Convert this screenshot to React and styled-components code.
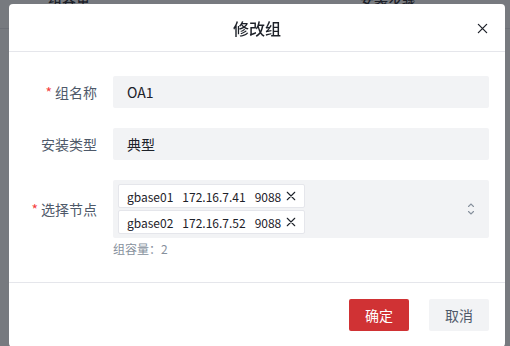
import React from "react";
import styled, { createGlobalStyle } from "styled-components";

const Global = createGlobalStyle`
  html, body {
    margin: 0;
    padding: 0;
    background: #fff;
    overflow: hidden;
  }
  body {
    font-family: "Noto Sans CJK SC", "Noto Sans", sans-serif;
    color: #1d2129;
  }
`;

const Page = styled.div`
  margin-top: -30px;
`;

const TableHead = styled.div`
  display: flex;
  align-items: center;
  height: 58px;
  border-bottom: 1px solid #e5e6eb;
  font-size: 14px;
  font-weight: 500;
  color: #1d2129;
  span:first-child {
    margin-left: 48px;
    width: 312px;
  }
`;

const Mask = styled.div`
  position: fixed;
  inset: 0;
  background: rgba(29, 33, 41, 0.6);
`;

const Modal = styled.div`
  position: fixed;
  top: 4px;
  left: 9px;
  width: 496px;
  background: #fff;
  border-radius: 4px;
`;

const Header = styled.div`
  position: relative;
  height: 47px;
  display: flex;
  align-items: center;
  justify-content: center;
  border-bottom: 1px solid #e5e6eb;
  font-size: 16px;
  font-weight: 500;
  color: #1d2129;
`;

const Close = styled.button`
  position: absolute;
  right: 17px;
  top: 18px;
  width: 12px;
  height: 12px;
  padding: 0;
  border: 0;
  background: none;
  display: flex;
  align-items: center;
  justify-content: center;
  cursor: pointer;
`;

const Body = styled.div`
  padding: 24px 16px 24px 20px;
  display: flex;
  flex-direction: column;
  gap: 20px;
`;

const Row = styled.div`
  display: flex;
  align-items: flex-start;
`;

const Label = styled.label`
  width: 68px;
  padding-right: 16px;
  height: ${(p) => p.$height || 32}px;
  flex-shrink: 0;
  display: flex;
  align-items: center;
  justify-content: flex-end;
  font-size: 14px;
  color: #4e5969;
  white-space: nowrap;
  &::before {
    content: ${(p) => (p.$required ? '"*"' : "none")};
    color: #f53f3f;
    margin-right: 3px;
    font-size: 14px;
  }
`;

const Control = styled.div`
  flex: 1;
  display: flex;
  flex-direction: column;
`;

const Input = styled.div`
  height: 32px;
  box-sizing: border-box;
  padding: 0 14px;
  display: flex;
  align-items: center;
  background: #f2f3f5;
  border-radius: 2px;
  font-size: 14px;
  color: #1d2129;
`;

const Select = styled.div`
  position: relative;
  box-sizing: border-box;
  padding: 4px 40px 4px 5px;
  display: flex;
  flex-direction: column;
  align-items: flex-start;
  gap: 2px;
  background: #f2f3f5;
  border-radius: 2px;
`;

const Tag = styled.div`
  height: 24px;
  box-sizing: border-box;
  padding: 0 8px;
  display: flex;
  align-items: center;
  gap: 9px;
  background: #fff;
  border: 1px solid #e5e6eb;
  border-radius: 2px;
  font-size: 12px;
  color: #1d2129;
  white-space: nowrap;
`;

const TagClose = styled.span`
  display: flex;
  align-items: center;
  margin-left: -4px;
`;

const Arrow = styled.div`
  position: absolute;
  right: 14px;
  top: 50%;
  transform: translateY(-50%);
  display: flex;
`;

const Hint = styled.div`
  margin-top: 2px;
  font-size: 12px;
  line-height: 18px;
  color: #86909c;
`;

const Footer = styled.div`
  border-top: 1px solid #e5e6eb;
  padding: 16px 16px 16px;
  display: flex;
  justify-content: flex-end;
  gap: 20px;
`;

const Button = styled.button`
  width: 60px;
  height: 32px;
  border: 0;
  border-radius: 2px;
  font-family: inherit;
  font-size: 14px;
  background: ${(p) => (p.$primary ? "#d03234" : "#f2f3f5")};
  color: ${(p) => (p.$primary ? "#fff" : "#4e5969")};
  cursor: pointer;
`;

const nodes = [
  { name: "gbase01", ip: "172.16.7.41", port: "9088" },
  { name: "gbase02", ip: "172.16.7.52", port: "9088" },
];

function Cross({ size = 12, color = "#1d2129", width = 1.4 }) {
  return (
    <svg width={size} height={size} viewBox="0 0 12 12">
      <path d="M1.5 1.5L10.5 10.5M10.5 1.5L1.5 10.5" stroke={color} strokeWidth={width} strokeLinecap="round" fill="none" />
    </svg>
  );
}

export default function App() {
  return (
    <>
      <Global />
      <Page>
        <TableHead>
          <span>组容量</span>
          <span>安装步骤</span>
        </TableHead>
      </Page>
      <Mask />
      <Modal>
        <Header>
          修改组
          <Close aria-label="close">
            <Cross size={11} />
          </Close>
        </Header>
        <Body>
          <Row>
            <Label $required>组名称</Label>
            <Control>
              <Input>OA1</Input>
            </Control>
          </Row>
          <Row>
            <Label>安装类型</Label>
            <Control>
              <Input>典型</Input>
            </Control>
          </Row>
          <Row>
            <Label $required $height={58}>选择节点</Label>
            <Control>
              <Select>
                {nodes.map((n) => (
                  <Tag key={n.name}>
                    <span>{n.name}</span>
                    <span>{n.ip}</span>
                    <span>{n.port}</span>
                    <TagClose>
                      <Cross size={10} width={1.3} />
                    </TagClose>
                  </Tag>
                ))}
                <Arrow>
                  <svg width="8" height="14" viewBox="0 0 8 14">
                    <path d="M1.5 4.5L4 2L6.5 4.5M1.5 9.5L4 12L6.5 9.5" stroke="#86909c" strokeWidth="1.1" fill="none" strokeLinecap="round" />
                  </svg>
                </Arrow>
              </Select>
              <Hint>组容量：2</Hint>
            </Control>
          </Row>
        </Body>
        <Footer>
          <Button $primary>确定</Button>
          <Button>取消</Button>
        </Footer>
      </Modal>
    </>
  );
}
